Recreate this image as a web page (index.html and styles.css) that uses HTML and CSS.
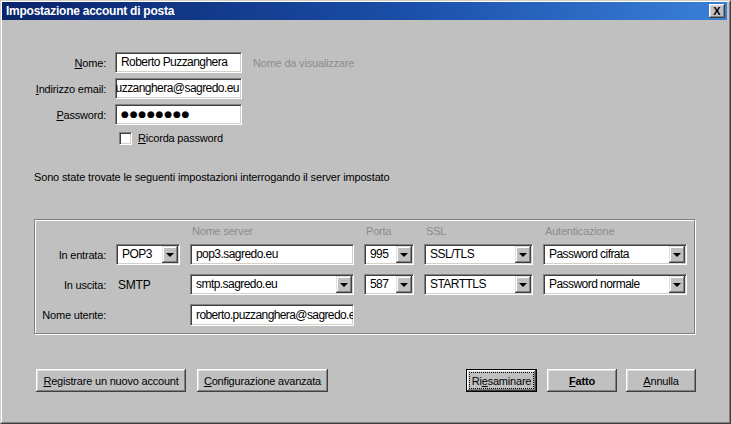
FILE: index.html
```html
<!DOCTYPE html>
<html lang="it">
<head>
<meta charset="utf-8">
<title>Impostazione account di posta</title>
<link rel="stylesheet" href="styles.css">
</head>
<body>
<div class="window">
  <div class="frame">
    <div class="titlebar">
      <span class="title">Impostazione account di posta</span>
      <span class="close">X</span>
    </div>
    <div class="content">
      <div class="account-form">
        <span class="lbl"><u>N</u>ome:</span>
        <div class="field">Roberto Puzzanghera</div>
        <span class="hint">Nome da visualizzare</span>

        <span class="lbl"><u>I</u>ndirizzo email:</span>
        <div class="field end"><span>uzzanghera@sagredo.eu</span></div>
        <span></span>

        <span class="lbl"><u>P</u>assword:</span>
        <div class="field dots">●●●●●●●●</div>
        <span></span>

        <div class="check-row">
          <span class="checkbox"></span>
          <span class="check-label"><u>R</u>icorda password</span>
        </div>
      </div>

      <p class="info">Sono state trovate le seguenti impostazioni interrogando il server impostato</p>

      <div class="group">
        <div class="grow head">
          <span></span><span></span>
          <span class="colhead">Nome server</span>
          <span class="colhead">Porta</span>
          <span class="colhead">SSL</span>
          <span class="colhead">Autenticazione</span>
        </div>
        <div class="grow r1">
          <span class="glbl">In entrata:</span>
          <div class="field combo"><span class="val">POP3</span><span class="drop"></span></div>
          <div class="field">pop3.sagredo.eu</div>
          <div class="field combo"><span class="val">995</span><span class="drop"></span></div>
          <div class="field combo"><span class="val">SSL/TLS</span><span class="drop"></span></div>
          <div class="field combo"><span class="val">Password cifrata</span><span class="drop"></span></div>
        </div>
        <div class="grow r2">
          <span class="glbl">In uscita:</span>
          <span class="plain">SMTP</span>
          <div class="field combo"><span class="val">smtp.sagredo.eu</span><span class="drop"></span></div>
          <div class="field combo"><span class="val">587</span><span class="drop"></span></div>
          <div class="field combo"><span class="val">STARTTLS</span><span class="drop"></span></div>
          <div class="field combo"><span class="val">Password normale</span><span class="drop"></span></div>
        </div>
        <div class="grow r3">
          <span class="glbl">Nome utente:</span>
          <span></span>
          <div class="field tall">roberto.puzzanghera@sagredo.e</div>
        </div>
      </div>

      <div class="buttons">
        <div class="btn-group">
          <span class="btn w150"><u>R</u>egistrare un nuovo account</span>
          <span class="btn w131"><u>C</u>onfigurazione avanzata</span>
        </div>
        <div class="btn-group right">
          <span class="btn default w71"><span class="focus">Ri<u>e</u>saminare</span></span>
          <span class="btn bold w70"><u>F</u>atto</span>
          <span class="btn w70"><u>A</u>nnulla</span>
        </div>
      </div>
    </div>
  </div>
</div>
</body>
</html>
```
FILE: styles.css
```css
html, body {
  margin: 0;
  padding: 0;
}
body {
  width: 731px;
  height: 424px;
  overflow: hidden;
  background: #c0c0c0;
  font-family: "Liberation Sans", Arial, sans-serif;
  font-size: 11px;
  color: #000;
}
.window {
  box-sizing: border-box;
  width: 731px;
  height: 424px;
  border: 1px solid;
  border-color: #d4d0c8 #404040 #404040 #d4d0c8;
  background: #c0c0c0;
}
.frame {
  box-sizing: border-box;
  height: 100%;
  border: 1px solid;
  border-color: #ffffff #808080 #808080 #ffffff;
  padding: 0 2px 0 0;
  display: flex;
  flex-direction: column;
}
.titlebar {
  height: 18px;
  display: flex;
  align-items: center;
  justify-content: space-between;
  padding: 0 2px 0 4px;
  background: linear-gradient(to right, #0a246a 0%, #1a4ea8 55%, #3a80d8 100%);
}
.title {
  color: #fff;
  font-weight: bold;
  font-size: 12px;
  letter-spacing: -0.25px;
}
.close {
  box-sizing: border-box;
  width: 16px;
  height: 14px;
  background: #c0c0c0;
  box-shadow: inset -1px -1px #404040, inset 1px 1px #ffffff, inset -2px -2px #808080, inset 2px 2px #dfdfdf;
  font-size: 11px;
  font-weight: bold;
  line-height: 14px;
  text-align: center;
  color: #000;
}
.content {
  flex: 1;
  display: flex;
  flex-direction: column;
}
.account-form {
  margin-top: 32px;
  display: grid;
  grid-template-columns: 104px 127px auto;
  grid-template-rows: 21px 21px 21px 15px;
  column-gap: 9px;
  row-gap: 5px;
  align-items: center;
}
.lbl {
  text-align: right;
  letter-spacing: -0.2px;
  white-space: nowrap;
}
.hint {
  margin-left: 2px;
  color: #8c8c8c;
  letter-spacing: -0.2px;
}
.field {
  box-sizing: border-box;
  height: 21px;
  background: #fff;
  border: 1px solid;
  border-color: #808080 #ffffff #ffffff #808080;
  box-shadow: inset 1px 1px #404040, inset -1px -1px #d4d0c8;
  padding: 0 4px 0 5px;
  font-size: 12px;
  letter-spacing: -0.55px;
  line-height: 19px;
  white-space: nowrap;
  overflow: hidden;
}
.field.end {
  display: flex;
  justify-content: flex-end;
  padding: 0 2px 0 2px;
}
.field.dots {
  font-family: "DejaVu Sans", sans-serif;
  font-size: 9px;
  letter-spacing: 0.8px;
  line-height: 19px;
}
.check-row {
  grid-column: 2 / 4;
  align-self: start;
  display: flex;
  align-items: center;
  gap: 6px;
  margin-left: 4px;
  margin-top: 1px;
  height: 14px;
}
.checkbox {
  box-sizing: border-box;
  width: 13px;
  height: 13px;
  background: #fff;
  border: 1px solid;
  border-color: #808080 #ffffff #ffffff #808080;
  box-shadow: inset 1px 1px #404040, inset -1px -1px #d4d0c8;
}
.check-label {
  letter-spacing: -0.2px;
}
.info {
  margin: 25px 0 0 32px;
  line-height: 14px;
  letter-spacing: -0.15px;
}
.group {
  box-sizing: border-box;
  margin: 35px 0 0 32px;
  width: 661px;
  border: 1px solid #808080;
  box-shadow: 1px 1px #ffffff, inset 1px 1px #ffffff;
  padding: 1px 0 7px 1px;
}
.grow {
  display: grid;
  grid-template-columns: 70px 64px 164px 50px 109px 144px;
  column-gap: 10px;
  align-items: center;
}
.head {
  margin-top: 4px;
  line-height: 13px;
}
.colhead {
  padding-left: 2px;
  color: #8c8c8c;
  letter-spacing: -0.2px;
}
.r1 { margin-top: 6px; }
.r2 { margin-top: 9px; }
.r3 { margin-top: 9px; }
.glbl {
  text-align: right;
  letter-spacing: -0.2px;
  white-space: nowrap;
}
.plain {
  padding-left: 2px;
  font-size: 12px;
  letter-spacing: -0.2px;
}
.field.tall {
  height: 22px;
  line-height: 20px;
  padding-right: 0;
  letter-spacing: -0.6px;
}
.combo {
  display: flex;
  align-items: stretch;
  padding-right: 0;
}
.combo .val {
  flex: 1;
  overflow: hidden;
}
.drop {
  flex: 0 0 16px;
  margin: 1px 1px 1px 0;
  background: #c0c0c0;
  box-shadow: inset -1px -1px #404040, inset 1px 1px #dfdfdf, inset -2px -2px #808080, inset 2px 2px #ffffff;
  display: flex;
  align-items: center;
  justify-content: center;
}
.drop::before {
  content: "";
  width: 0;
  height: 0;
  border-left: 4px solid transparent;
  border-right: 4px solid transparent;
  border-top: 4px solid #000;
  margin-top: 1px;
}
.buttons {
  margin: 35px 31px 0 34px;
  display: flex;
  justify-content: space-between;
}
.btn-group {
  display: flex;
  gap: 11px;
}
.btn-group.right {
  gap: 10px;
}
.btn-group.right .btn:last-child {
  margin-left: -1px;
}
.btn {
  box-sizing: border-box;
  height: 23px;
  display: flex;
  align-items: center;
  justify-content: center;
  background: #c0c0c0;
  box-shadow: inset -1px -1px #404040, inset 1px 1px #ffffff, inset -2px -2px #808080, inset 2px 2px #dfdfdf;
  letter-spacing: -0.2px;
  white-space: nowrap;
}
.btn.bold {
  font-weight: bold;
  font-size: 11px;
}
.btn.default {
  border: 1px solid #000;
  padding: 3px;
}
.focus {
  box-sizing: border-box;
  width: 100%;
  height: 100%;
  display: flex;
  align-items: center;
  justify-content: center;
  outline: 1px dotted #000;
}
.w150 { width: 150px; }
.w131 { width: 131px; }
.w71 { width: 71px; }
.w70 { width: 70px; }
```
